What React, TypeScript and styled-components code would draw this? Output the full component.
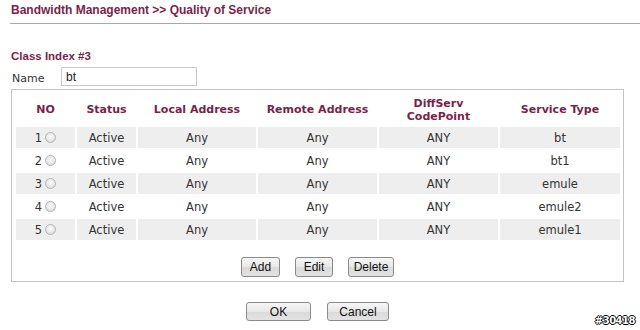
import styled, { createGlobalStyle } from "styled-components";

const GlobalStyle = createGlobalStyle`
    body {
        margin: 0;
        background: #fff;
        font-family: "DejaVu Sans", Verdana, sans-serif;
        font-size: 11px;
        color: #333;
    }
`;

const Page = styled.div`
    position: relative;
    width: 640px;
    height: 330px;
    overflow: hidden;
`;

const PageTitle = styled.div`
    margin-left: 10px;
    height: 24px;
    border-bottom: 1px solid #a8a8a8;
    padding-left: 1px;
    box-sizing: border-box;
    line-height: 21px;
    font-family: "Liberation Sans", Arial, sans-serif;
    font-weight: bold;
    font-size: 12px;
    color: #7a1f4b;
`;

const Content = styled.div`
    padding-left: 11px;
`;

const ClassTitle = styled.div`
    margin-top: 25px;
    line-height: 15px;
    font-family: "Liberation Sans", Arial, sans-serif;
    font-weight: bold;
    font-size: 11.5px;
    color: #7a1f4b;
`;

const NameRow = styled.div`
    display: flex;
    align-items: center;
    height: 19px;
    margin-top: 3px;
`;

const Label = styled.span`
    width: 49px;
    padding-left: 1px;
    padding-top: 3px;
`;

const TextInput = styled.input`
    width: 136px;
    height: 19px;
    box-sizing: border-box;
    border: 1px solid #c8c8c8;
    padding: 0 4px;
    font-family: "Liberation Sans", Arial, sans-serif;
    font-size: 12px;
    color: #222;
    outline: none;
`;

const Panel = styled.div`
    width: 613px;
    box-sizing: border-box;
    margin-top: 3px;
    border: 1px solid #c4c4c4;
    padding: 2px 2px 4px 2px;
`;

const Table = styled.table`
    border-spacing: 2px;
    table-layout: fixed;
    width: 604px;
`;

const HeadCell = styled.th`
    height: 31px;
    padding: 0;
    font-weight: bold;
    font-size: 11px;
    line-height: 13px;
    color: #7a1f4b;
    text-align: center;
`;

const Cell = styled.td<{ $shade: boolean }>`
    height: 21px;
    padding: 0;
    text-align: center;
    font-size: 11.5px;
    background: ${(p) => (p.$shade ? "#eeeeee" : "transparent")};
`;

const NoBox = styled.span`
    display: inline-flex;
    align-items: center;
    gap: 3px;
`;

const Radio = styled.span`
    display: inline-block;
    width: 11px;
    height: 11px;
    border-radius: 50%;
    border: 1px solid #b4b4b4;
    box-sizing: border-box;
    background: radial-gradient(circle at 50% 40%, #fbfbfb 0%, #e8e8e8 55%, #d0d0d0 100%);
`;

const ButtonRow = styled.div<{ $top: number; $gap: number }>`
    display: flex;
    justify-content: center;
    gap: ${(p) => p.$gap}px;
    margin-top: ${(p) => p.$top}px;
`;

const Button = styled.button<{ $w: number; $h: number }>`
    width: ${(p) => p.$w}px;
    height: ${(p) => p.$h}px;
    padding: 0;
    border: 1px solid #8a8a8a;
    border-radius: 3px;
    background: linear-gradient(#f6f6f6, #e8e8e8 50%, #dadada 51%, #e2e2e2);
    font-family: "Liberation Sans", Arial, sans-serif;
    font-size: 12px;
    color: #111;
`;

const Footer = styled.div`
    width: 613px;
`;

const Watermark = styled.div`
    position: absolute;
    right: 5px;
    bottom: 4px;
    font-family: "DejaVu Sans", sans-serif;
    font-weight: bold;
    font-size: 10px;
    letter-spacing: -0.5px;
    color: #fff;
    text-shadow: 1px 0 0 #000, -1px 0 0 #000, 0 1px 0 #000, 0 -1px 0 #000;
`;

const columns = [59, 59, 118, 119, 119, 120];

const rows = [
    { no: 1, service: "bt" },
    { no: 2, service: "bt1" },
    { no: 3, service: "emule" },
    { no: 4, service: "emule2" },
    { no: 5, service: "emule1" },
];

function App() {
    return <Page>
        <GlobalStyle />
        <PageTitle>Bandwidth Management &gt;&gt; Quality of Service</PageTitle>
        <Content>
            <ClassTitle>Class Index #3</ClassTitle>
            <NameRow>
                <Label>Name</Label>
                <TextInput defaultValue="bt" />
            </NameRow>
            <Panel>
                <Table>
                    <colgroup>
                        {columns.map((w, i) => <col key={i} style={{ width: w }} />)}
                    </colgroup>
                    <thead>
                        <tr>
                            <HeadCell>NO</HeadCell>
                            <HeadCell>Status</HeadCell>
                            <HeadCell>Local Address</HeadCell>
                            <HeadCell>Remote Address</HeadCell>
                            <HeadCell>DiffServ<br />CodePoint</HeadCell>
                            <HeadCell>Service Type</HeadCell>
                        </tr>
                    </thead>
                    <tbody>
                        {rows.map((r, i) => {
                            const shade = i % 2 === 0;
                            return <tr key={r.no}>
                                <Cell $shade={shade}>
                                    <NoBox>{r.no}<Radio /></NoBox>
                                </Cell>
                                <Cell $shade={shade}>Active</Cell>
                                <Cell $shade={shade}>Any</Cell>
                                <Cell $shade={shade}>Any</Cell>
                                <Cell $shade={shade}>ANY</Cell>
                                <Cell $shade={shade}>{r.service}</Cell>
                            </tr>
                        })}
                    </tbody>
                </Table>
                <ButtonRow $top={15} $gap={15}>
                    <Button $w={39} $h={20}>Add</Button>
                    <Button $w={38} $h={20}>Edit</Button>
                    <Button $w={46} $h={20}>Delete</Button>
                </ButtonRow>
            </Panel>
            <Footer>
                <ButtonRow $top={20} $gap={16}>
                    <Button $w={65} $h={19}>OK</Button>
                    <Button $w={62} $h={19}>Cancel</Button>
                </ButtonRow>
            </Footer>
        </Content>
        <Watermark>#30418</Watermark>
    </Page>
}

export default App;
